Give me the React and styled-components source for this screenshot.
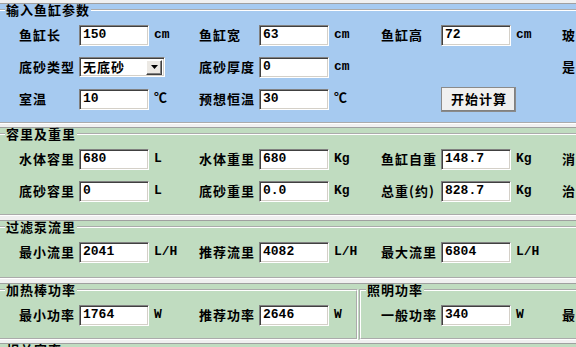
import React from "react";
import styled, { createGlobalStyle } from "styled-components";

const BLUE = "#A6CAF0";
const GREEN = "#C0DCC0";
const EDGE = "#A0A0A0";
const CJK = `"Noto Sans CJK SC", "Noto Sans", sans-serif`;
const MONO = `"Liberation Mono", "Noto Sans CJK SC", monospace`;

const Global = createGlobalStyle`
  html, body { margin: 0; padding: 0; overflow: hidden; background: #F0F0F0; }
  body { width: 576px; height: 347px; }
  * { box-sizing: border-box; }
`;

const Window = styled.div`
  width: 720px;
  padding-top: 3px;
  display: flex;
  flex-direction: column;
  font-family: ${CJK};
  color: #000;
`;

const Section = styled.section`
  margin-top: ${(p) => p.$gap}px;
  border-top: 1px solid ${EDGE};
  background: ${(p) => p.$bg};
  display: flex;
  gap: 1px;
`;

const Group = styled.fieldset`
  margin: 0 0 0 ${(p) => p.$ml}px;
  padding: 0;
  border: 2px groove #ffffff;
  min-width: 0;
  width: ${(p) => (p.$w ? `${p.$w}px` : "auto")};
  flex: ${(p) => (p.$w ? "none" : "1")};
`;

const Legend = styled.legend`
  margin-left: 5px;
  padding: 0 1px;
  font-family: ${CJK};
  font-weight: 700;
  font-size: 13px;
  line-height: 12px;
  letter-spacing: 1px;
  white-space: nowrap;
`;

const Body = styled.div`
  padding: 3px 0 ${(p) => p.$pb}px ${(p) => p.$pl}px;
`;

const Row = styled.div`
  display: grid;
  grid-template-columns: ${(p) => p.$cols};
  height: 32px;
  align-items: center;
`;

const Field = styled.div`
  display: flex;
  align-items: center;
  white-space: nowrap;
`;

const Label = styled.span`
  width: 60px;
  flex: none;
  font-family: ${CJK};
  font-weight: 700;
  font-size: 13px;
  line-height: 16px;
  letter-spacing: 1px;
`;

const sunken = `
  border-style: solid;
  border-width: 1px;
  border-color: #808080 #ffffff #ffffff #808080;
  box-shadow: inset 1px 1px 0 #404040, inset -1px -1px 0 #d4d0c8;
  background: #ffffff;
`;

const TextBox = styled.input`
  ${sunken}
  width: 70px;
  height: 21px;
  padding: 0 0 1px 3px;
  margin: 0;
  font-family: ${MONO};
  font-weight: 700;
  font-size: 13px;
  color: #000;
  outline: none;
`;

const Unit = styled.span`
  margin-left: 5px;
  font-family: ${MONO};
  font-weight: 700;
  font-size: 13px;
  line-height: 14px;
`;

const Select = styled.div`
  ${sunken}
  width: 86px;
  height: 20px;
  display: flex;
  align-items: center;
  padding: 0 2px 0 3px;
`;

const SelectText = styled.span`
  font-family: ${CJK};
  font-weight: 700;
  font-size: 13px;
  line-height: 14px;
  letter-spacing: 1px;
`;

const DropButton = styled.span`
  margin-left: auto;
  width: 16px;
  height: 15px;
  display: flex;
  align-items: center;
  justify-content: center;
  background: #ece9e4;
  border-style: solid;
  border-width: 1px;
  border-color: #ffffff #404040 #404040 #ffffff;
  box-shadow: inset -1px -1px 0 #808080;
`;

const Button = styled.button`
  width: 75px;
  height: 25px;
  margin: 0;
  padding: 0 0 1px 1px;
  background: #f0f0f0;
  border-style: solid;
  border-width: 1px;
  border-color: #ffffff #404040 #404040 #ffffff;
  box-shadow: inset -1px -1px 0 #808080;
  outline: 1px solid #8a8a8a;
  outline-offset: -1px;
  font-family: ${CJK};
  font-weight: 700;
  font-size: 13px;
  letter-spacing: 1px;
  color: #000;
`;

const Arrow = () => (
  <svg width="7" height="4" viewBox="0 0 7 4">
    <path d="M0 0h7L3.5 4z" fill="#000" />
  </svg>
);

const F = ({ label, value, unit }) => (
  <Field>
    <Label>{label}</Label>
    {value !== undefined && <TextBox readOnly value={value} />}
    {unit && <Unit>{unit}</Unit>}
  </Field>
);

const COLS = "180px 182px 181px auto";

export default function App() {
  return (
    <>
      <Global />
      <Window>
        <Section $gap={0} $bg={BLUE}>
          <Group $ml={-2}>
            <Legend>输入鱼缸参数</Legend>
            <Body $pl={19} $pb={7}>
              <Row $cols={COLS}>
                <F label="鱼缸长" value="150" unit="cm" />
                <F label="鱼缸宽" value="63" unit="cm" />
                <F label="鱼缸高" value="72" unit="cm" />
                <F label="玻" />
              </Row>
              <Row $cols={COLS}>
                <Field>
                  <Label>底砂类型</Label>
                  <Select>
                    <SelectText>无底砂</SelectText>
                    <DropButton>
                      <Arrow />
                    </DropButton>
                  </Select>
                </Field>
                <F label="底砂厚度" value="0" unit="cm" />
                <Field />
                <F label="是" />
              </Row>
              <Row $cols={COLS}>
                <F label="室温" value="10" unit="℃" />
                <F label="预想恒温" value="30" unit="℃" />
                <Field>
                  <Label />
                  <Button>开始计算</Button>
                </Field>
                <Field />
              </Row>
            </Body>
          </Group>
        </Section>

        <Section $gap={3} $bg={GREEN}>
          <Group $ml={-2}>
            <Legend>容里及重里</Legend>
            <Body $pl={19} $pb={7}>
              <Row $cols={COLS}>
                <F label="水体容里" value="680" unit="L" />
                <F label="水体重里" value="680" unit="Kg" />
                <F label="鱼缸自重" value="148.7" unit="Kg" />
                <F label="消" />
              </Row>
              <Row $cols={COLS}>
                <F label="底砂容里" value="0" unit="L" />
                <F label="底砂重里" value="0.0" unit="Kg" />
                <F label="总重(约)" value="828.7" unit="Kg" />
                <F label="治" />
              </Row>
            </Body>
          </Group>
        </Section>

        <Section $gap={4} $bg={GREEN}>
          <Group $ml={-2}>
            <Legend>过滤泵流里</Legend>
            <Body $pl={19} $pb={9}>
              <Row $cols={COLS}>
                <F label="最小流里" value="2041" unit="L/H" />
                <F label="推荐流里" value="4082" unit="L/H" />
                <F label="最大流里" value="6804" unit="L/H" />
                <Field />
              </Row>
            </Body>
          </Group>
        </Section>

        <Section $gap={4} $bg={GREEN}>
          <Group $ml={-2} $w={360}>
            <Legend>加热棒功率</Legend>
            <Body $pl={19} $pb={7}>
              <Row $cols="180px auto">
                <F label="最小功率" value="1764" unit="W" />
                <F label="推荐功率" value="2646" unit="W" />
              </Row>
            </Body>
          </Group>
          <Group $ml={0}>
            <Legend>照明功率</Legend>
            <Body $pl={20} $pb={7}>
              <Row $cols="181px auto">
                <F label="一般功率" value="340" unit="W" />
                <F label="最" />
              </Row>
            </Body>
          </Group>
        </Section>

        <Section $gap={3} $bg={GREEN}>
          <Group $ml={-2}>
            <Legend>相关容率</Legend>
            <Body $pl={19} $pb={7}>
              <Row $cols={COLS} />
            </Body>
          </Group>
        </Section>
      </Window>
    </>
  );
}
